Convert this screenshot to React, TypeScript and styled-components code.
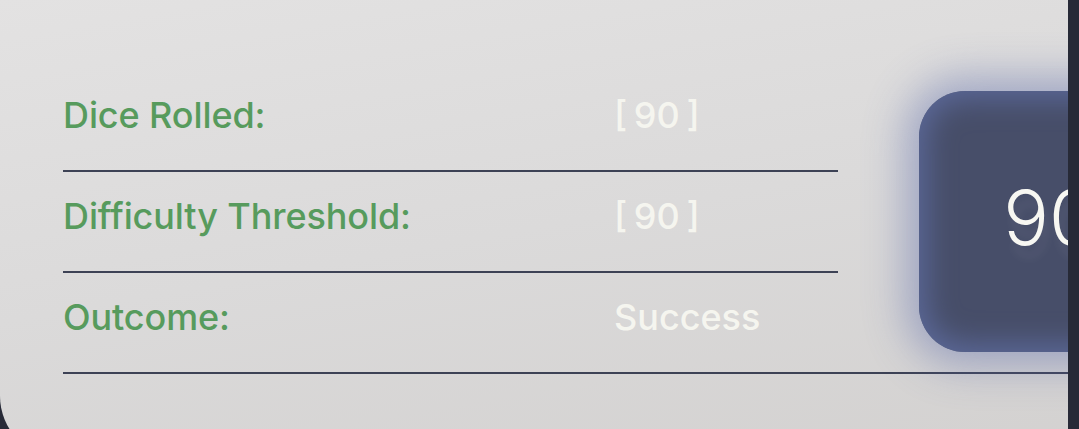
import styled, { createGlobalStyle } from 'styled-components';

const GlobalStyle = createGlobalStyle`
  html, body {
    margin: 0;
    padding: 0;
    background: #272a37;
    overflow: hidden;
  }
`;

const Page = styled.div`
  display: flex;
  width: 1079px;
  height: 429px;
  overflow: hidden;
  background: #272a37;
`;

const Panel = styled.div`
  box-sizing: border-box;
  flex: 0 0 1068px;
  height: 460px;
  margin-top: -2px;
  padding: 73px 0 0 63px;
  border-radius: 0 0 0 62px;
  overflow: hidden;
  background: linear-gradient(170deg, #e3e2e2 0%, #dbdada 50%, #d3d1d0 100%);
`;

const Grid = styled.div`
  display: grid;
  grid-template-columns: 532px 243px 420px;
  grid-template-rows: repeat(3, 101px);
`;

const Cell = styled.div<{ $row?: number }>`
  display: flex;
  align-items: center;
  box-sizing: border-box;
  padding-bottom: 11px;
  border-bottom: 2px solid #3d4255;
  grid-row: ${(p) => p.$row ?? 'auto'};
`;

const Label = styled(Cell)`
  font-family: Inter, 'Open Sans', sans-serif;
  font-weight: 500;
  font-size: 36px;
  letter-spacing: -0.1px;
  color: #579b5d;
`;

const Value = styled(Cell)`
  padding-left: 19px;
  font-family: Inter, 'Open Sans', sans-serif;
  font-weight: 500;
  font-size: 36px;
  word-spacing: -3px;
  color: #f5f5ef;
`;

const DiceCell = styled(Cell)`
  grid-column: 3;
  grid-row: 1 / span 3;
  padding: 0 0 0 81px;
`;

const DiceBox = styled.div`
  display: flex;
  align-items: center;
  justify-content: center;
  box-sizing: border-box;
  width: 261px;
  height: 261px;
  padding-bottom: 10px;
  border-radius: 46px;
  background: #474e69;
  box-shadow:
    inset 0 0 28px 8px #5b6898,
    0 0 40px 14px rgba(88, 104, 168, 0.45);
  font-family: Inter, 'Open Sans', sans-serif;
  font-weight: 300;
  font-size: 76px;
  color: #f7f7f2;
  text-shadow: 4px 12px 10px rgba(255, 255, 255, 0.08);
`;

const rows = [
  { label: 'Dice Rolled:', value: '[ 90 ]' },
  { label: 'Difficulty Threshold:', value: '[ 90 ]' },
  { label: 'Outcome:', value: 'Success' },
];

const App = () => (
  <Page>
    <GlobalStyle />
    <Panel>
      <Grid>
        {rows.flatMap((r, i) => [
          <Label key={`l${i}`} $row={i + 1}>{r.label}</Label>,
          <Value key={`v${i}`} $row={i + 1}>{r.value}</Value>,
        ])}
        <DiceCell>
          <DiceBox>90</DiceBox>
        </DiceCell>
      </Grid>
    </Panel>
  </Page>
);

export default App;
